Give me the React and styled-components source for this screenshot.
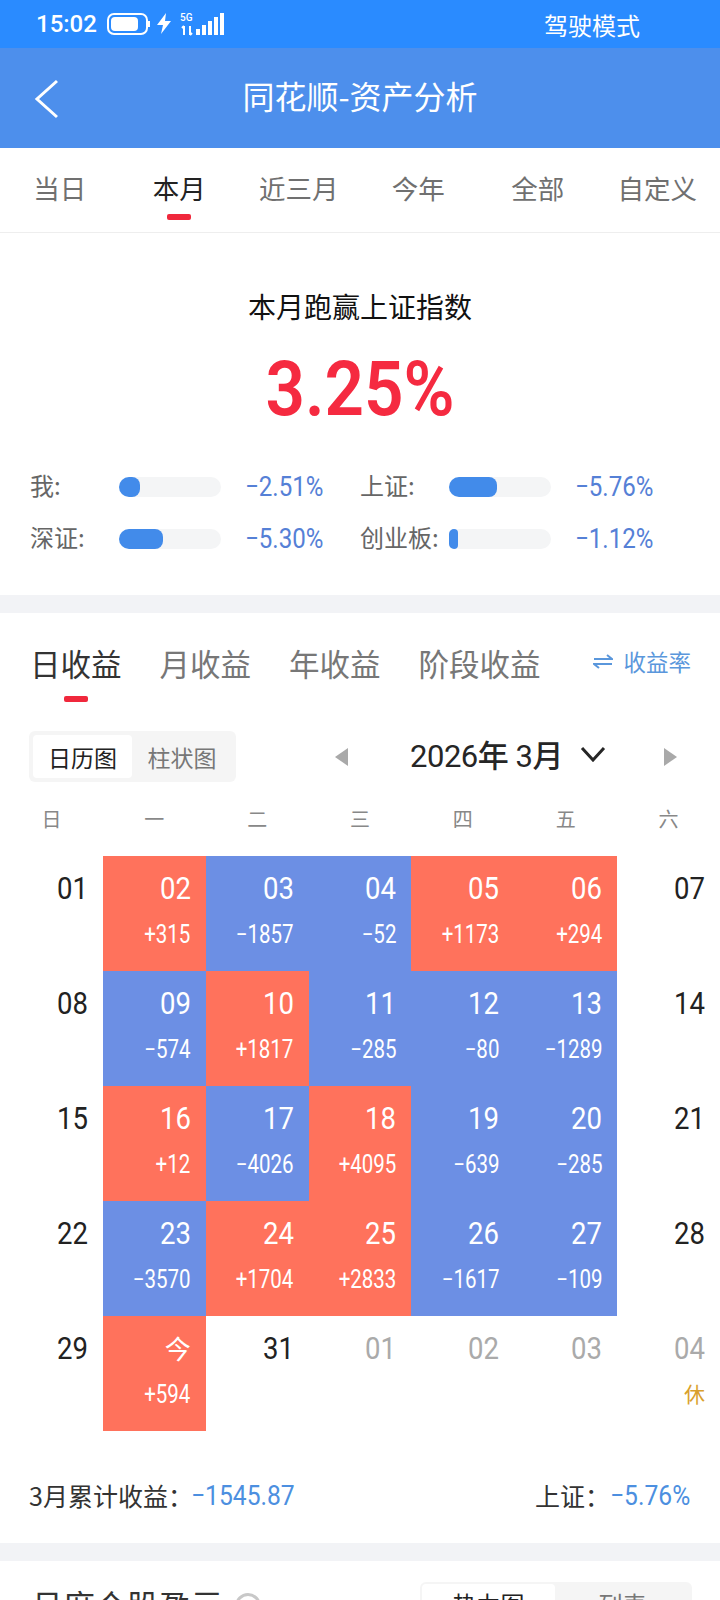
import React from "react";
import styled, { createGlobalStyle, css } from "styled-components";

const CJK = `"Noto Sans CJK SC", "Noto Sans", sans-serif`;
const NUM = `Roboto, "Noto Sans CJK SC", sans-serif`;

// the app's digits are a narrow DIN-like face, Roboto squeezed comes closest
const narrow = (origin, amount = 0.86) => css`
  display: block;
  white-space: nowrap;
  transform: scaleX(${amount});
  transform-origin: ${origin} center;
`;

const GlobalStyle = createGlobalStyle`
  html, body { margin: 0; padding: 0; background: #fff; }
  body { font-family: ${CJK}; }
  * { box-sizing: border-box; }
`;

const Page = styled.div`
  width: 720px;
  height: 1600px;
  overflow: hidden;
  background: #fff;
`;

const StatusBar = styled.div`
  height: 48px;
  background: #2a8bff;
  color: #fff;
  display: flex;
  align-items: center;
  padding: 0 80px 0 36px;
  gap: 10px;
`;

const Clock = styled.span`
  font: 500 24px ${NUM};
`;

const DriveMode = styled.span`
  margin-left: auto;
  font-size: 24px;
`;

const Header = styled.header`
  height: 100px;
  padding-bottom: 6px;
  background: #4d8fec;
  color: #fff;
  display: flex;
  align-items: center;
  justify-content: center;
  position: relative;
  font-size: 32px;
`;

const BackIcon = styled.svg`
  position: absolute;
  left: 34px;
  top: 31px;
`;

const TabBar = styled.nav`
  height: 85px;
  padding-right: 3px;
  display: grid;
  grid-template-columns: repeat(6, 1fr);
  border-bottom: 1px solid #eee;
`;

const Tab = styled.div`
  display: flex;
  flex-direction: column;
  align-items: center;
  padding-top: 20px;
  font-size: 26.5px;
  line-height: 40px;
  color: ${(p) => (p.$active ? "#222" : "#707070")};
  &::after {
    content: "";
    width: 24px;
    height: 6px;
    margin-top: 6px;
    border-radius: 2px;
    background: ${(p) => (p.$active ? "#f0283c" : "transparent")};
  }
`;

const Summary = styled.section`
  height: 362px;
  padding-top: 53px;
  text-align: center;
`;

const SummaryTitle = styled.div`
  font-size: 28px;
  line-height: 40px;
  color: #111;
`;

const Beat = styled.div`
  margin-top: 21px;
  font: 600 76px/84px ${NUM};
  color: #f52a40;
  ${narrow("center", 0.91)}
`;

const Compare = styled.div`
  margin-top: 36px;
  padding-left: 30px;
  display: grid;
  grid-template-columns: 330px 330px;
  row-gap: 32px;
  text-align: left;
`;

const CompareItem = styled.div`
  display: grid;
  grid-template-columns: 89px 102px auto;
  align-items: center;
  height: 20px;
`;

const CompareLabel = styled.span`
  margin-bottom: 4px;
  font-size: 24px;
  color: #666;
`;

const Track = styled.div`
  height: 20px;
  border-radius: 10px;
  background: #f4f5f6;
`;

const Fill = styled.div`
  height: 100%;
  border-radius: 10px 8px 8px 10px;
  background: #428bea;
`;

const CompareValue = styled.span`
  margin-left: 24px;
  font: 450 28px ${NUM};
  color: #5580d6;
  ${narrow("left", 0.86)}
`;

const Band = styled.div`
  height: 18px;
  background: #f2f3f6;
`;

const EarningsTabs = styled.div`
  height: 118px;
  padding: 24px 29px 0 30px;
  display: flex;
  align-items: flex-start;
  gap: 38px;
`;

const EarningsTab = styled.div`
  display: flex;
  flex-direction: column;
  align-items: center;
  font-size: 30.5px;
  line-height: 52px;
  color: ${(p) => (p.$active ? "#333" : "#777")};
  &::after {
    content: "";
    width: 24px;
    height: 6px;
    margin-top: 7px;
    border-radius: 2px;
    background: ${(p) => (p.$active ? "#f0283c" : "transparent")};
  }
`;

const RateSwitch = styled.div`
  margin-left: auto;
  height: 48px;
  display: flex;
  align-items: center;
  gap: 10px;
  font-size: 22.5px;
  color: #5a97dc;
`;

const Controls = styled.div`
  height: 51px;
  padding: 0 42px 0 29px;
  display: flex;
  align-items: center;
`;

const Segment = styled.div`
  display: flex;
  padding: ${(p) => p.$pad || "4px"};
  border-radius: 6px;
  background: #f5f5f5;
`;

const SegmentItem = styled.div`
  width: ${(p) => p.$width || "99px"};
  height: ${(p) => p.$height || "43px"};
  display: flex;
  align-items: center;
  justify-content: center;
  border-radius: 4px;
  font-size: ${(p) => p.$size || "23px"};
  color: ${(p) => (p.$active ? "#222" : "#777")};
  background: ${(p) => (p.$active ? "#fff" : "transparent")};
`;

const MonthPicker = styled.div`
  margin-left: 98px;
  flex: 1;
  display: flex;
  align-items: center;
  justify-content: space-between;
`;

const MonthLabel = styled.div`
  margin: 0 0 6px 4px;
  display: flex;
  align-items: center;
  gap: 17px;
  font: 450 31px ${NUM}, ${CJK};
  color: #262626;
`;

const MonthText = styled.span`
  letter-spacing: -0.5px;
`;

const WeekRow = styled.div`
  margin-top: 18px;
  display: grid;
  grid-template-columns: repeat(7, 1fr);
  height: 36px;
  align-items: center;
  text-align: center;
  font-size: 20px;
  color: #888;
`;

const Calendar = styled.div`
  margin-top: 20px;
  display: grid;
  grid-template-columns: repeat(7, 1fr);
  grid-auto-rows: 115px;
`;

const tones = { up: "#ff725c", down: "#6c8fe4" };

const Day = styled.div`
  padding: 14px 15px 0 0;
  display: flex;
  flex-direction: column;
  align-items: flex-end;
  background: ${(p) => tones[p.$tone] || "transparent"};
  color: ${(p) => (p.$tone ? "#fff" : p.$muted ? "#aaa" : "#222")};
`;

const DayNum = styled.div`
  font: 450 32px/36px ${NUM};
  ${narrow("right")}
`;

const TodayMark = styled.div`
  font: 400 26px/36px ${CJK};
`;

const DayValue = styled.div`
  margin-top: 16px;
  font: 450 25px/26px ${NUM};
  ${narrow("right", 0.82)}
`;

const HolidayMark = styled.div`
  margin-top: 14px;
  font: 400 21px/26px ${CJK};
  color: #d9a02c;
`;

const Totals = styled.div`
  height: 112px;
  padding: 46px 29px 0;
  display: flex;
  justify-content: space-between;
  align-items: flex-start;
  font-size: 25px;
  color: #333;
`;

const TotalGroup = styled.div`
  display: flex;
  align-items: center;
  height: 36px;
`;

const TotalValue = styled.span`
  width: ${(p) => p.$width};
  margin-left: ${(p) => p.$shift || "0"};
  font: 450 28px ${NUM};
  color: #4c8fe0;
  ${narrow("left", 0.88)}
`;

const Holdings = styled.div`
  padding: 21px 28px 0 31px;
  display: flex;
  justify-content: space-between;
  align-items: flex-start;
`;

const HoldingsTitle = styled.div`
  margin-top: 2px;
  display: flex;
  align-items: center;
  gap: 12px;
  height: 40px;
  font-size: 32px;
  color: #333;
`;

const HelpIcon = styled.span`
  margin-top: 4px;
  width: 26px;
  height: 26px;
  border-radius: 50%;
  border: 3px solid #c8c8c8;
  color: #c8c8c8;
  display: flex;
  align-items: center;
  justify-content: center;
  font-size: 16px;
`;

const days = [
  ["01"], ["02", "+315", "up"], ["03", "−1857", "down"], ["04", "−52", "down"], ["05", "+1173", "up"], ["06", "+294", "up"], ["07"],
  ["08"], ["09", "−574", "down"], ["10", "+1817", "up"], ["11", "−285", "down"], ["12", "−80", "down"], ["13", "−1289", "down"], ["14"],
  ["15"], ["16", "+12", "up"], ["17", "−4026", "down"], ["18", "+4095", "up"], ["19", "−639", "down"], ["20", "−285", "down"], ["21"],
  ["22"], ["23", "−3570", "down"], ["24", "+1704", "up"], ["25", "+2833", "up"], ["26", "−1617", "down"], ["27", "−109", "down"], ["28"],
  ["29"], ["今", "+594", "up"], ["31"], ["01", null, null, true], ["02", null, null, true], ["03", null, null, true], ["04", "休", null, true],
];

const compare = [
  ["我:", 21, "−2.51%"],
  ["上证:", 48, "−5.76%"],
  ["深证:", 44, "−5.30%"],
  ["创业板:", 9, "−1.12%"],
];

function StatusIcons() {
  return (
    <svg width="118" height="26" viewBox="0 0 118 26" fill="none">
      <rect x="1" y="3" width="39" height="20" rx="6" stroke="#fff" strokeWidth="2" />
      <rect x="4" y="6" width="27" height="14" rx="4" fill="#fff" />
      <rect x="41" y="10" width="2" height="6" fill="#fff" />
      <path d="M59 2 L50 14 H56 L54 23 L64 10 H58 Z" fill="#fff" />
      <path d="M77 15v9M75 17l2-2M83 15v9M83 24l2-2" stroke="#fff" strokeWidth="2" />
      <rect x="89" y="18" width="4" height="6" fill="#fff" />
      <rect x="95" y="14" width="4" height="10" fill="#fff" />
      <rect x="101" y="10" width="4" height="14" fill="#fff" />
      <rect x="107" y="6" width="4" height="18" fill="#fff" />
      <rect x="113" y="2" width="4" height="22" fill="#fff" />
      <text x="73" y="10" fill="#fff" fontSize="10" fontWeight="500" fontFamily="Roboto">5G</text>
    </svg>
  );
}

function Triangle({ right }) {
  return (
    <svg width="15" height="18" viewBox="0 0 15 18">
      <path d={right ? "M1 0 L14 9 L1 18 Z" : "M14 0 L1 9 L14 18 Z"} fill="#a9a9a9" />
    </svg>
  );
}

export default function App() {
  return (
    <Page>
      <GlobalStyle />
      <StatusBar>
        <Clock>15:02</Clock>
        <StatusIcons />
        <DriveMode>驾驶模式</DriveMode>
      </StatusBar>
      <Header>
        <BackIcon width="26" height="40" viewBox="0 0 26 40" fill="none">
          <path d="M23 2 L3 20 L23 38" stroke="#fff" strokeWidth="3" />
        </BackIcon>
        同花顺-资产分析
      </Header>
      <TabBar>
        {["当日", "本月", "近三月", "今年", "全部", "自定义"].map((t) => (
          <Tab key={t} $active={t === "本月"}>{t}</Tab>
        ))}
      </TabBar>
      <Summary>
        <SummaryTitle>本月跑赢上证指数</SummaryTitle>
        <Beat>3.25%</Beat>
        <Compare>
          {compare.map(([label, w, value]) => (
            <CompareItem key={label}>
              <CompareLabel>{label}</CompareLabel>
              <Track><Fill style={{ width: w }} /></Track>
              <CompareValue>{value}</CompareValue>
            </CompareItem>
          ))}
        </Compare>
      </Summary>
      <Band />
      <EarningsTabs>
        {["日收益", "月收益", "年收益", "阶段收益"].map((t) => (
          <EarningsTab key={t} $active={t === "日收益"}>{t}</EarningsTab>
        ))}
        <RateSwitch>
          <svg width="20" height="20" viewBox="0 0 20 20" fill="none" stroke="#5a97dc" strokeWidth="2">
            <path d="M1 8H19L14 4" />
            <path d="M19 13H1L6 17" />
          </svg>
          收益率
        </RateSwitch>
      </EarningsTabs>
      <Controls>
        <Segment>
          <SegmentItem $active>日历图</SegmentItem>
          <SegmentItem $width="100px">柱状图</SegmentItem>
        </Segment>
        <MonthPicker>
          <Triangle />
          <MonthLabel>
            <MonthText>2026年 3月</MonthText>
            <svg width="26" height="16" viewBox="0 0 26 16" fill="none">
              <path d="M2 2 L13 14 L24 2" stroke="#262626" strokeWidth="3" />
            </svg>
          </MonthLabel>
          <Triangle right />
        </MonthPicker>
      </Controls>
      <WeekRow>
        {["日", "一", "二", "三", "四", "五", "六"].map((d) => <div key={d}>{d}</div>)}
      </WeekRow>
      <Calendar>
        {days.map(([n, v, tone, muted], i) => (
          <Day key={i} $tone={tone} $muted={muted}>
            {n === "今" ? <TodayMark>{n}</TodayMark> : <DayNum>{n}</DayNum>}
            {v === "休" ? <HolidayMark>{v}</HolidayMark> : v && <DayValue>{v}</DayValue>}
          </Day>
        ))}
      </Calendar>
      <Totals>
        <TotalGroup>3月累计收益：<TotalValue $width="102px" $shift="-2px">−1545.87</TotalValue></TotalGroup>
        <TotalGroup>上证：<TotalValue $width="81px">−5.76%</TotalValue></TotalGroup>
      </Totals>
      <Band />
      <Holdings>
        <HoldingsTitle>月度个股盈亏<HelpIcon>?</HelpIcon></HoldingsTitle>
        <Segment $pad="2px">
          <SegmentItem $active $width="133px" $height="38px" $size="24px">热力图</SegmentItem>
          <SegmentItem $width="135px" $height="38px" $size="24px">列表</SegmentItem>
        </Segment>
      </Holdings>
    </Page>
  );
}
